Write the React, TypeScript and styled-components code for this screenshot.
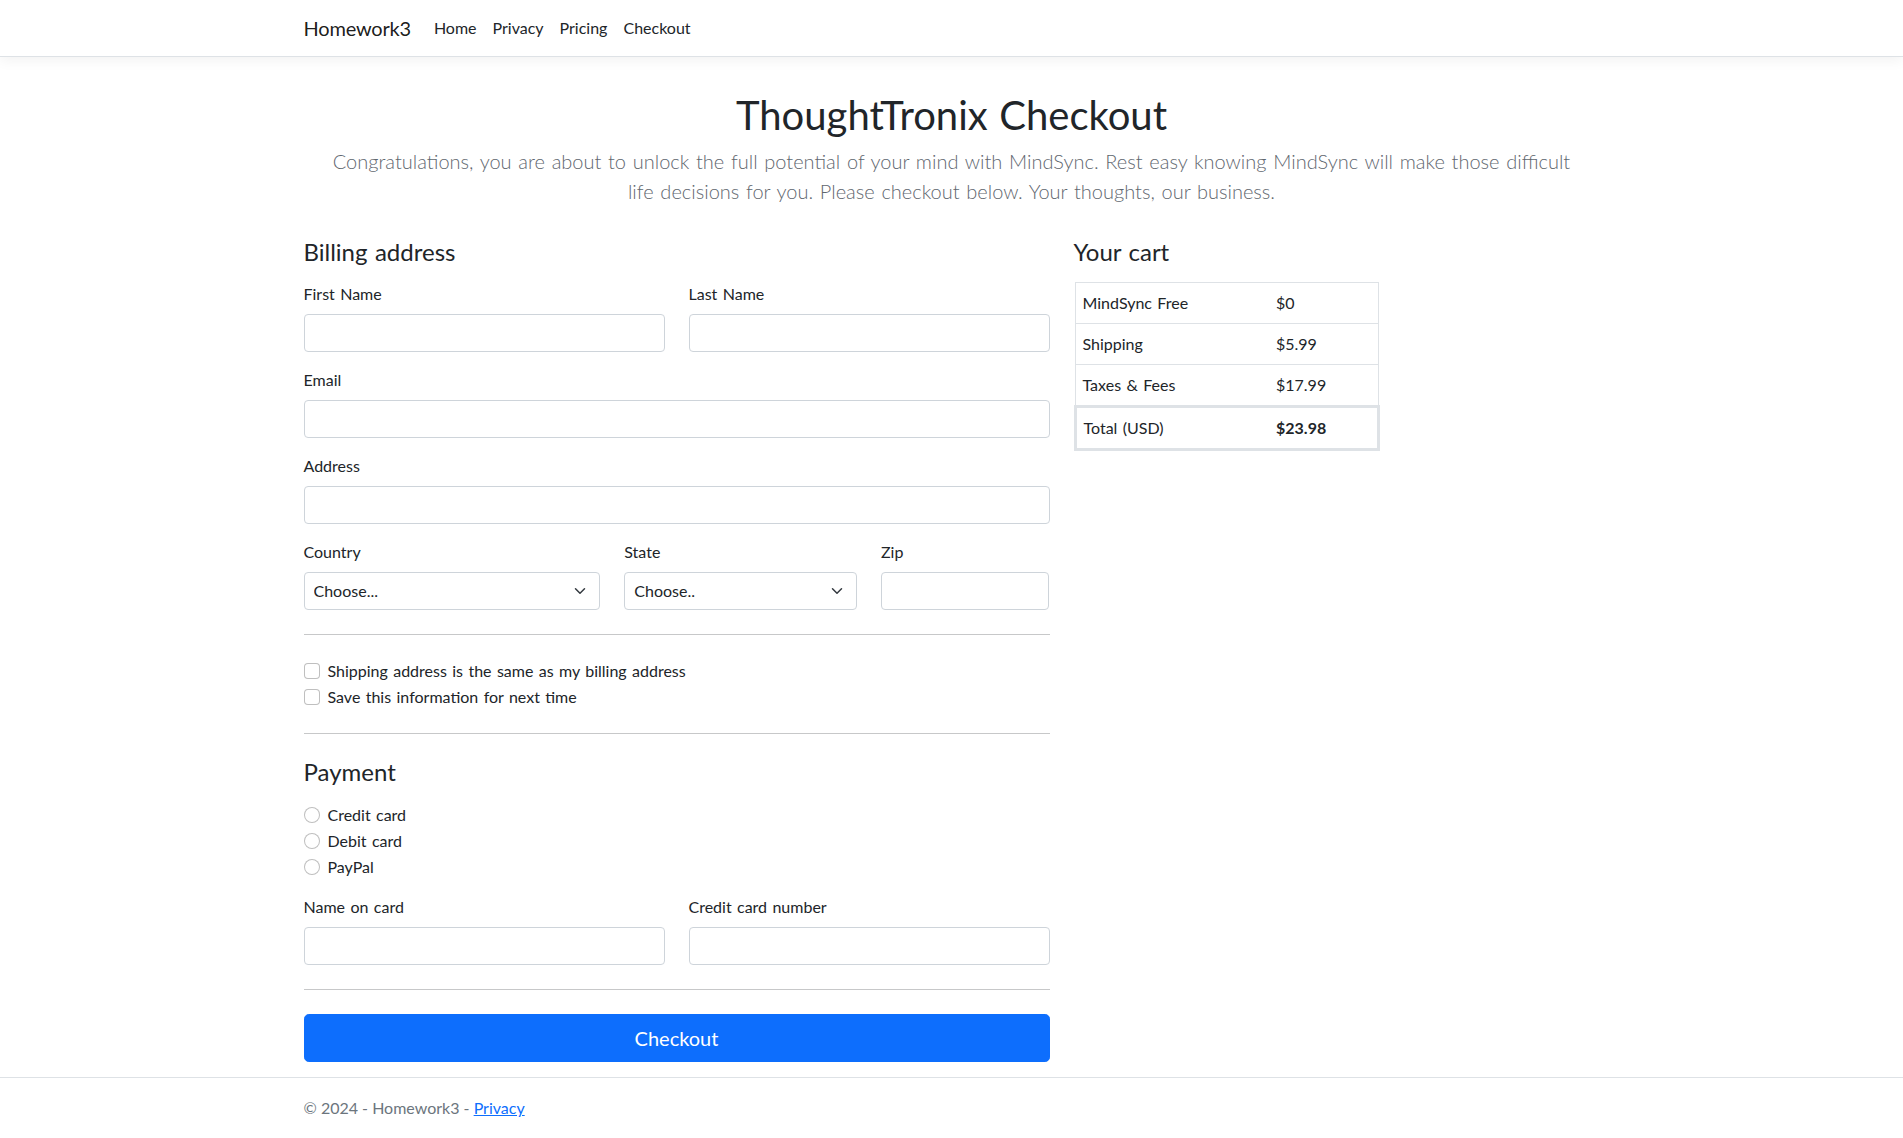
import React from 'react';
import styled, { createGlobalStyle } from 'styled-components';

const GlobalStyle = createGlobalStyle`
  *, *::before, *::after { box-sizing: border-box; }
  html, body { margin: 0; padding: 0; }
  body {
    font-family: Lato, "Segoe UI", "Noto Sans", sans-serif;
    font-size: 16px;
    line-height: 1.5;
    color: #212529;
    background: #fff;
    word-spacing: 0.08em;
  }
`;

const Page = styled.div`
  display: flex;
  flex-direction: column;
  min-height: 100vh;
`;

const Container = styled.div`
  width: 100%;
  max-width: 1320px;
  padding: 0 12px;
  margin: 0 auto;
`;

const Header = styled.header`
  background: #fff;
  border-bottom: 1px solid #dee2e6;
  box-shadow: 0 4px 12px rgba(0, 0, 0, 0.05);
  margin-bottom: 16px;
  padding: 8px 0;
`;

const NavBar = styled(Container)`
  display: flex;
  align-items: center;
`;

const Brand = styled.a`
  font-size: 20px;
  line-height: 1.5;
  padding: 5px 0;
  margin-right: 15px;
  color: rgba(0, 0, 0, 0.9);
  text-decoration: none;
  letter-spacing: -0.01em;
`;

const NavList = styled.nav`
  display: flex;
  align-items: center;
`;

const NavLink = styled.a`
  padding: 8px;
  color: #212529;
  text-decoration: none;
`;

const Main = styled.main`
  flex: 1;
  padding-bottom: 14px;
`;

const Hero = styled.div`
  text-align: center;
  padding-top: 18px;
`;

const Title = styled.h1`
  margin: 0 0 7px;
  font-size: 40px;
  font-weight: 400;
  line-height: 1.2;
`;

const Lead = styled.p`
  margin: 0 0 32px;
  font-size: 20px;
  font-weight: 300;
  line-height: 1.5;
  color: #5f676f;
`;

const LeadLine = styled.span`
  display: block;
  white-space: nowrap;
`;

const Columns = styled.div`
  display: grid;
  grid-template-columns: minmax(0, 746fr) minmax(0, 526fr);
  column-gap: 24px;
  align-items: start;
`;

const SectionTitle = styled.h4`
  margin: 0 0 15px;
  font-size: 24px;
  font-weight: 400;
  line-height: 1.2;
`;

const FieldRow = styled.div<{ $cols: string; $mb?: number }>`
  display: grid;
  grid-template-columns: ${(p) => p.$cols};
  column-gap: 24px;
  margin-bottom: ${(p) => p.$mb ?? 0}px;
`;

const Field = styled.div<{ $mb?: number }>`
  margin-bottom: ${(p) => p.$mb ?? 0}px;
`;

const Label = styled.label`
  display: block;
  margin-bottom: 8px;
`;

const TextInput = styled.input`
  display: block;
  width: 100%;
  height: 38px;
  padding: 6px 12px;
  font: inherit;
  color: #212529;
  background: #fff;
  border: 1px solid #ced4da;
  border-radius: 4px;
  outline: none;
`;

const SelectWrap = styled.div`
  position: relative;
`;

const Select = styled.select`
  display: block;
  width: 100%;
  height: 38px;
  padding: 6px 36px 6px 9px;
  font: inherit;
  color: #212529;
  background: #fff;
  border: 1px solid #ced4da;
  border-radius: 4px;
  appearance: none;
  -webkit-appearance: none;
  outline: none;
`;

const Chevron = styled.svg`
  position: absolute;
  right: 14px;
  top: 50%;
  width: 12px;
  height: 12px;
  transform: translateY(-50%);
  pointer-events: none;
`;

const Divider = styled.hr`
  margin: 24px 0;
  border: 0;
  height: 1px;
  background: #212529;
  opacity: 0.25;
`;

const Check = styled.div`
  display: flex;
  align-items: flex-start;
  gap: 8px;
  min-height: 24px;
  margin-bottom: 2px;
`;

const CheckBox = styled.input<{ $round?: boolean }>`
  appearance: none;
  -webkit-appearance: none;
  flex: 0 0 auto;
  width: 16px;
  height: 16px;
  margin: 4px 0 0;
  background: #fff;
  border: 1px solid rgba(0, 0, 0, 0.25);
  border-radius: ${(p) => (p.$round ? '50%' : '4px')};
`;

const RadioGroup = styled.div`
  margin: 16px 0;
`;

const SubmitButton = styled.button`
  display: block;
  width: 100%;
  height: 48px;
  padding: 8px 16px;
  font-family: inherit;
  font-size: 20px;
  line-height: 1.5;
  color: #fff;
  background: #0d6efd;
  border: 1px solid #0d6efd;
  border-radius: 4.8px;
  cursor: pointer;
`;

const CartTable = styled.table`
  width: 306px;
  border-collapse: collapse;
  border: 1px solid #dee2e6;
`;

const CartRow = styled.tr<{ $total?: boolean }>`
  border: ${(p) => (p.$total ? '3px' : '1px')} solid #dee2e6;
`;

const CartCell = styled.td<{ $bold?: boolean; $w?: number }>`
  padding: 8px 8px 8px 7px;
  line-height: 24px;
  font-weight: ${(p) => (p.$bold ? 700 : 400)};
  width: ${(p) => (p.$w ? `${p.$w}px` : 'auto')};
`;

const Footer = styled.footer`
  border-top: 1px solid #dee2e6;
  line-height: 60px;
  color: #6c757d;
  white-space: nowrap;
  word-spacing: 0;
`;

const FooterLink = styled.a`
  color: #0d6efd;
  text-decoration: underline;
`;

const chevron = (
  <Chevron viewBox="0 0 16 16" aria-hidden="true">
    <path
      d="M2 5l6 6 6-6"
      fill="none"
      stroke="#343a40"
      strokeWidth="2"
      strokeLinecap="round"
      strokeLinejoin="round"
    />
  </Chevron>
);

const cart = [
  { name: 'MindSync Free', price: '$0' },
  { name: 'Shipping', price: '$5.99' },
  { name: 'Taxes & Fees', price: '$17.99' },
];

export default function App() {
  return (
    <>
      <GlobalStyle />
      <Page>
        <Header>
          <NavBar>
            <Brand href="#">Homework3</Brand>
            <NavList>
              <NavLink href="#">Home</NavLink>
              <NavLink href="#">Privacy</NavLink>
              <NavLink href="#">Pricing</NavLink>
              <NavLink href="#">Checkout</NavLink>
            </NavList>
          </NavBar>
        </Header>
        <Main>
          <Container>
            <Hero>
              <Title>ThoughtTronix Checkout</Title>
              <Lead>
                <LeadLine>
                  Congratulations, you are about to unlock the full potential of your mind with MindSync. Rest easy knowing MindSync will make those difficult
                </LeadLine>
                <LeadLine>life decisions for you. Please checkout below. Your thoughts, our business.</LeadLine>
              </Lead>
            </Hero>
            <Columns>
              <form onSubmit={(e) => e.preventDefault()}>
                <SectionTitle>Billing address</SectionTitle>
                <FieldRow $cols="1fr 1fr" $mb={16}>
                  <Field>
                    <Label>First Name</Label>
                    <TextInput type="text" />
                  </Field>
                  <Field>
                    <Label>Last Name</Label>
                    <TextInput type="text" />
                  </Field>
                </FieldRow>
                <Field $mb={16}>
                  <Label>Email</Label>
                  <TextInput type="email" />
                </Field>
                <Field $mb={16}>
                  <Label>Address</Label>
                  <TextInput type="text" />
                </Field>
                <FieldRow $cols="296.8fr 232.7fr 168.5fr">
                  <Field>
                    <Label>Country</Label>
                    <SelectWrap>
                      <Select defaultValue="">
                        <option value="">Choose...</option>
                      </Select>
                      {chevron}
                    </SelectWrap>
                  </Field>
                  <Field>
                    <Label>State</Label>
                    <SelectWrap>
                      <Select defaultValue="">
                        <option value="">Choose..</option>
                      </Select>
                      {chevron}
                    </SelectWrap>
                  </Field>
                  <Field>
                    <Label>Zip</Label>
                    <TextInput type="text" />
                  </Field>
                </FieldRow>
                <Divider />
                <Check>
                  <CheckBox type="checkbox" id="same" />
                  <label htmlFor="same">Shipping address is the same as my billing address</label>
                </Check>
                <Check>
                  <CheckBox type="checkbox" id="save" />
                  <label htmlFor="save">Save this information for next time</label>
                </Check>
                <Divider />
                <SectionTitle>Payment</SectionTitle>
                <RadioGroup>
                  <Check>
                    <CheckBox type="radio" name="pay" id="credit" $round />
                    <label htmlFor="credit">Credit card</label>
                  </Check>
                  <Check>
                    <CheckBox type="radio" name="pay" id="debit" $round />
                    <label htmlFor="debit">Debit card</label>
                  </Check>
                  <Check>
                    <CheckBox type="radio" name="pay" id="paypal" $round />
                    <label htmlFor="paypal">PayPal</label>
                  </Check>
                </RadioGroup>
                <FieldRow $cols="1fr 1fr">
                  <Field>
                    <Label>Name on card</Label>
                    <TextInput type="text" />
                  </Field>
                  <Field>
                    <Label>Credit card number</Label>
                    <TextInput type="text" />
                  </Field>
                </FieldRow>
                <Divider />
                <SubmitButton type="submit">Checkout</SubmitButton>
              </form>
              <div>
                <SectionTitle>Your cart</SectionTitle>
                <CartTable>
                  <tbody>
                    {cart.map((item) => (
                      <CartRow key={item.name}>
                        <CartCell $w={194}>{item.name}</CartCell>
                        <CartCell>{item.price}</CartCell>
                      </CartRow>
                    ))}
                    <CartRow $total>
                      <CartCell $w={194}>Total (USD)</CartCell>
                      <CartCell $bold>$23.98</CartCell>
                    </CartRow>
                  </tbody>
                </CartTable>
              </div>
            </Columns>
          </Container>
        </Main>
        <Footer>
          <Container>
            © 2024 - Homework3 - <FooterLink href="#">Privacy</FooterLink>
          </Container>
        </Footer>
      </Page>
    </>
  );
}
